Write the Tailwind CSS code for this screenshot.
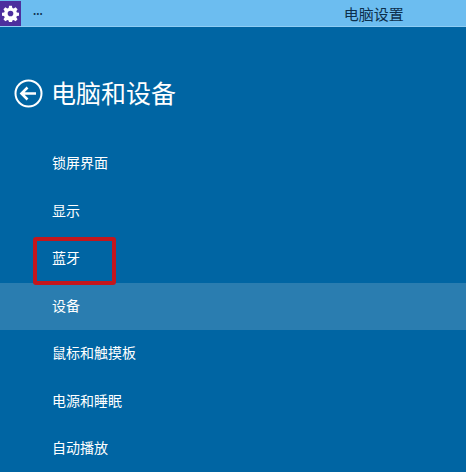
<!DOCTYPE html>
<html lang="zh">
<head>
  <meta charset="UTF-8" />
  <title>电脑设置</title>
  <script src="https://cdn.jsdelivr.net/npm/@tailwindcss/browser@4"></script>
</head>
<body class="w-[466px] h-[472px] overflow-hidden bg-[#0065a3] text-white font-['Noto_Sans_CJK_SC','Noto_Sans',sans-serif]">

  <!-- title bar -->
  <header class="flex items-center h-[27px] bg-[#6cbdf0] border-b border-[#8fcdf4] text-[#0c2f4c]">
    <div class="flex items-center justify-center w-[21px] h-[25px] bg-[#4d2f9e]">
      <svg width="17" height="17" viewBox="0 0 24 24" fill="none">
        <path fill="#fff" fill-rule="evenodd" d="M10 1h4l.6 3.2 1.9.8 2.7-1.8 2.8 2.8-1.8 2.7.8 1.9 3 .4v4l-3 .6-.8 1.9 1.8 2.7-2.8 2.8-2.7-1.8-1.9.8-.6 3h-4l-.6-3-1.9-.8-2.7 1.8-2.8-2.8 1.8-2.7-.8-1.9-3-.6v-4l3-.4.8-1.9-1.8-2.7 2.8-2.8 2.7 1.8 1.9-.8zM12 8a4 4 0 1 0 0 8 4 4 0 0 0 0-8z"/>
      </svg>
    </div>
    <div class="ml-3 mb-1 text-[10px] font-bold leading-none">...</div>
    <div class="ml-[301px] text-[15px] leading-none">电脑设置</div>
  </header>

  <!-- page heading -->
  <div class="flex items-center gap-[8px] mt-[50px] ml-[14px] h-[32px]">
    <svg width="29" height="29" viewBox="0 0 29 29" fill="none" stroke="#fff">
      <circle cx="14.5" cy="14.5" r="13" stroke-width="2"/>
      <path d="M22 14.5H8M13.5 8.5l-6 6 6 6" stroke-width="2.6"/>
    </svg>
    <h1 class="text-[25px] leading-none font-normal pb-[2px]">电脑和设备</h1>
  </div>

  <!-- menu -->
  <nav class="mt-[31px] text-[14px]">
    <div class="flex items-center h-[47.5px] pb-[2px] pl-[52px]">锁屏界面</div>
    <div class="flex items-center h-[47.5px] pb-[2px] pl-[52px]">显示</div>
    <div class="relative flex items-center h-[47.5px] pb-[2px] pl-[52px]">
      蓝牙
      <div class="absolute left-[33px] top-[2px] w-[83px] h-[48px] border-[4px] border-[#c4161c] rounded-[3px]"></div>
    </div>
    <div class="flex items-center h-[47.5px] pb-[2px] pl-[52px] bg-[#2a7db0]">设备</div>
    <div class="flex items-center h-[47.5px] pb-[2px] pl-[52px]">鼠标和触摸板</div>
    <div class="flex items-center h-[47.5px] pb-[2px] pl-[52px]">电源和睡眠</div>
    <div class="flex items-center h-[47.5px] pb-[2px] pl-[52px]">自动播放</div>
  </nav>

</body>
</html>
